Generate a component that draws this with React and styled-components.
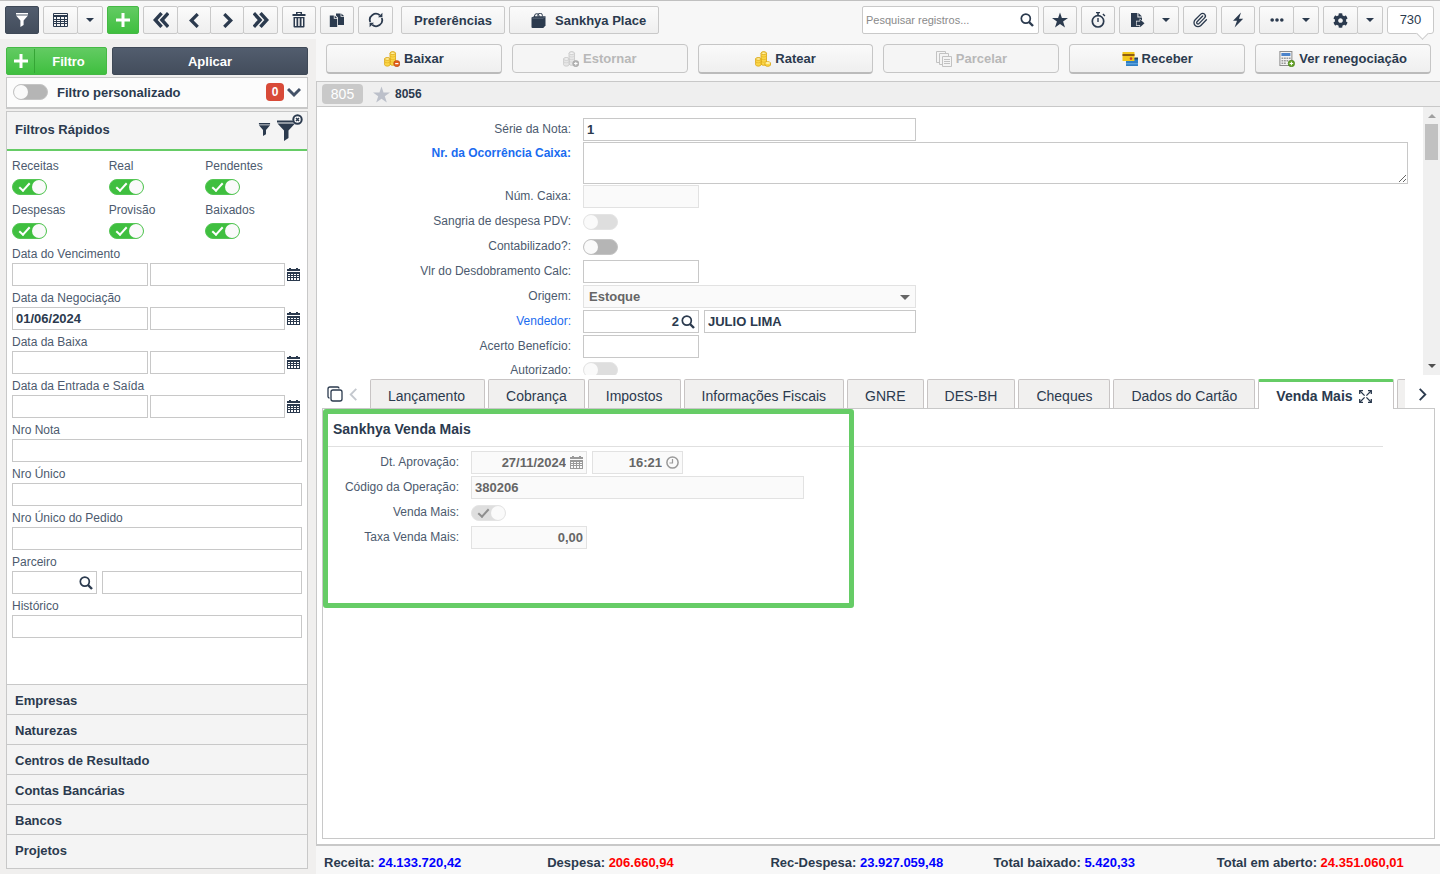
import React, { useState } from "react";
import styled, { createGlobalStyle, css } from "styled-components";
import { FaCog } from "react-icons/fa";
import { Paperclip } from "lucide-react";

const accordionItems = [
  "Empresas",
  "Naturezas",
  "Centros de Resultado",
  "Contas Bancárias",
  "Bancos",
  "Projetos",
];

const statusFilters = [
  "Receitas",
  "Real",
  "Pendentes",
  "Despesas",
  "Provisão",
  "Baixados",
];

const dateFilters = [
  { id: "vencimento", label: "Data do Vencimento" },
  { id: "negociacao", label: "Data da Negociação", from: "01/06/2024" },
  { id: "baixa", label: "Data da Baixa" },
  { id: "entrada", label: "Data da Entrada e Saída" },
];

const textFilters = [
  { id: "nota", label: "Nro Nota" },
  { id: "unico", label: "Nro Único" },
  { id: "pedido", label: "Nro Único do Pedido" },
];

const tabs = [
  "Lançamento",
  "Cobrança",
  "Impostos",
  "Informações Fiscais",
  "GNRE",
  "DES-BH",
  "Cheques",
  "Dados do Cartão",
  "Venda Mais",
];

const totals = [
  { label: "Receita:", value: "24.133.720,42", color: "#0000ff" },
  { label: "Despesa:", value: "206.660,94", color: "#ff0000" },
  { label: "Rec-Despesa:", value: "23.927.059,48", color: "#0000ff" },
  { label: "Total baixado:", value: "5.420,33", color: "#0000ff" },
  { label: "Total em aberto:", value: "24.351.060,01", color: "#ff0000" },
];

/* Icons */

const Icon = ({ size = 16, box = 16, children, ...rest }) => (
  <svg
    width={size}
    height={size}
    viewBox={`0 0 ${box} ${box}`}
    fill="currentColor"
    aria-hidden="true"
    {...rest}
  >
    {children}
  </svg>
);

const FunnelIcon = ({ size = 14 }) => (
  <Icon size={size} box={14}>
    <path d="M1 0h12v1.5H1zM1 2.5h12L8.6 7.6V12L5.4 14V7.6z" />
  </Icon>
);

const GridIcon = () => (
  <Icon size={15} box={15}>
    <path
      d="M1 0h13a1 1 0 0 1 1 1v12a1 1 0 0 1-1 1H1a1 1 0 0 1-1-1V1a1 1 0 0 1 1-1zM1 1v1h13V1zM1 4v2h2V4zm3 0v2h3V4zm4 0v2h3V4zm4 0v2h2V4zM1 7v1h2V7zm3 0v1h3V7zm4 0v1h3V7zm4 0v1h2V7zM1 9v1h2V9zm3 0v1h3V9zm4 0v1h3V9zm4 0v1h2V9zM1 11v2h2v-2zm3 0v2h3v-2zm4 0v2h3v-2zm4 0v2h2v-2z"
      fillRule="evenodd"
    />
  </Icon>
);

const CaretIcon = () => (
  <Icon size={8} box={8}>
    <path d="M0 2h8L4 6z" />
  </Icon>
);

const PlusIcon = () => (
  <Icon size={14} box={14}>
    <path d="M5.5 0h3v5.5H14v3H8.5V14h-3V8.5H0v-3h5.5z" />
  </Icon>
);

const ChevronIcon = ({ size = 15, weight = 3, dir = "left", double }) => (
  <Icon
    size={size}
    box={14}
    fill="none"
    stroke="currentColor"
    strokeWidth={weight}
    transform={dir === "right" ? "scale(-1 1)" : undefined}
  >
    {double ? (
      <path d="M7.5 1 2 7l5.5 6M13.3 1 7.8 7l5.5 6" />
    ) : (
      <path d="M10 1 4 7l6 6" />
    )}
  </Icon>
);

const TrashIcon = () => (
  <Icon>
    <path
      d="M5 0h6v2h3.5v2h-13V2H5zm1.5 1v1h3V1z"
      fillRule="evenodd"
    />
    <path
      d="M2.5 5h11v9.5a1 1 0 0 1-1 1h-9a1 1 0 0 1-1-1zM4 6.2V14h1.5V6.2zm3.2 0V14h1.5V6.2zm3.3 0V14H12V6.2z"
      fillRule="evenodd"
    />
  </Icon>
);

const CopyIcon = () => (
  <Icon>
    <path d="M7 1.5h4.6v3.3H15V13H9V5.6L7 3.4z" />
    <path d="M12.4 1.5 15 4H12.4z" />
    <path d="M0.8 3.6h4v3.2h3.4V15H0.8z" />
    <path d="M5.6 3.6 8.2 6H5.6z" />
  </Icon>
);

const RefreshIcon = () => (
  <Icon fill="none" stroke="currentColor" strokeWidth="1.8">
    <path d="M2.2 10A6.1 6.1 0 0 1 11.8 3.2M13.8 6A6.1 6.1 0 0 1 4.2 12.8" />
    <path d="M10 5.2h4.4V0.8zM6 10.8H1.6v4.4z" fill="currentColor" stroke="none" />
  </Icon>
);

const BagIcon = () => (
  <Icon size={15} box={15}>
    <path d="M0.5 4.5 3 3.2h11.5v9.3L12.3 15H1.5a1 1 0 0 1-1-1z" />
    <path
      d="M3.5 4.5V3a2.3 2.3 0 0 1 4.6 0v1M6.8 3.4V2.5a2.3 2.3 0 0 1 4.6 0v1"
      fill="none"
      stroke="currentColor"
    />
    <path d="M1.5 5.2h10.6l2-1.5" stroke="#7c8795" strokeWidth="0.6" fill="none" />
  </Icon>
);

const SearchIcon = ({ size = 14 }) => (
  <Icon size={size} box={14} fill="none" stroke="currentColor">
    <circle cx="5.8" cy="5.6" r="4.5" strokeWidth="1.7" />
    <path d="m9 9 4 4" strokeWidth="2.4" />
  </Icon>
);

const StarIcon = ({ size = 16 }) => (
  <Icon size={size}>
    <path d="m8 0.5 1.9 5.6H16l-4.9 3.5 1.9 5.9-5-3.6-5 3.6 1.9-5.9L0 6.1h6.1z" />
  </Icon>
);

const TimerIcon = () => (
  <Icon>
    <circle cx="8" cy="9.3" r="5.7" fill="none" stroke="currentColor" strokeWidth="1.7" />
    <path d="M6 0h4v1.3H8.8v2H7.2v-2H6zM12.4 2.4l1-1 2 2-1 1zM7.3 6h1.4v4H7.3z" />
  </Icon>
);

const ExportIcon = () => (
  <Icon>
    <path d="M2 1h6.4v4.6H13v3L10.6 6.4v2.4H7v5h3.6v1.2H2z" />
    <path d="M9.4 1 13 4.6H9.4z" />
    <path d="M7.6 9.6h3.5V7.4l4.4 3.9-4.4 3.9V13H7.6z" />
  </Icon>
);

const BoltIcon = () => (
  <Icon>
    <path d="M11 0.5 3 8.8h4L4.6 15.5 13.2 6.8H9z" />
  </Icon>
);

const DotsIcon = () => (
  <Icon>
    <circle cx="3.2" cy="8" r="1.8" />
    <circle cx="8" cy="8" r="1.8" />
    <circle cx="12.8" cy="8" r="1.8" />
  </Icon>
);

const CalendarIcon = () => (
  <Icon size={13} box={13}>
    <path
      d="M2 0h2v1h5V0h2v1h2v2H0V1h2zM0 4h13v9H0zM1 6v1h2V6zm3 0v1h2V6zm3 0v1h2V6zm3 0v1h2V6zM1 8v1h2V8zm3 0v1h2V8zm3 0v1h2V8zm3 0v1h2V8zM1 10v2h2v-2zm3 0v2h2v-2zm3 0v2h2v-2zm3 0v2h2v-2z"
      fillRule="evenodd"
    />
  </Icon>
);

const ClockIcon = () => (
  <Icon size={13} box={13} fill="none" stroke="currentColor">
    <circle cx="6.5" cy="6.5" r="5.6" strokeWidth="1.5" />
    <path d="M6.5 3v4H3.5" strokeWidth="1.2" />
  </Icon>
);

const ClearFunnelIcon = () => (
  <Icon size={28} box={28} overflow="visible">
    <path d="M1 4.5h15.5l1.5 2H1zM1.5 7.5h17.5L12.5 14.5V22L8 25V14.5z" />
    <circle cx="21.5" cy="3.5" r="4.2" fill="#fff" stroke="currentColor" strokeWidth="2" />
    <path d="m20 2 3 3M23 2l-3 3" stroke="currentColor" strokeWidth="1.5" />
  </Icon>
);

const WindowsIcon = () => (
  <Icon fill="none" stroke="currentColor" strokeWidth="1.3">
    <rect x="4" y="4" width="11" height="11" rx="2" />
    <path d="M2.5 12A1.5 1.5 0 0 1 1 10.5V3a2 2 0 0 1 2-2h7.5A1.5 1.5 0 0 1 12 2.5" />
  </Icon>
);

const ExpandIcon = () => (
  <Icon size={13} box={13} fill="none" stroke="currentColor" strokeWidth="1.3">
    <path d="M0.7 4V0.7H4M9 0.7h3.3V4M12.3 9v3.3H9M4 12.3H0.7V9" />
    <path d="m1 1 4.6 4.6M12 1 7.4 5.6M12 12 7.4 7.4M1 12l4.6-4.6" />
  </Icon>
);

const Coins = ({ line, fill, light }) => (
  <g stroke={line} strokeWidth="0.8">
    <path d="M6 2.2C6 .4 11.5.4 11.5 2.2V13c0 1.8-5.5 1.8-5.5 0z" fill={fill} />
    <ellipse cx="8.7" cy="2.2" rx="2.7" ry="1.3" fill={light} />
    <path
      d="M6 4.8c0 1.6 5.5 1.6 5.5 0M6 7.4C6 9 11.5 9 11.5 7.4M6 10c0 1.6 5.5 1.6 5.5 0"
      fill="none"
      opacity="0.6"
    />
    <path d="M.6 8c0-1.8 5.4-1.8 5.4 0v5.8c0 1.8-5.4 1.8-5.4 0z" fill={fill} />
    <ellipse cx="3.3" cy="8" rx="2.7" ry="1.3" fill={light} />
    <path d="M.6 10.6c0 1.6 5.4 1.6 5.4 0" fill="none" opacity="0.6" />
  </g>
);

const CoinsMinusIcon = () => (
  <Icon>
    <Coins line="#dba510" fill="#fbd649" light="#fff2a6" />
    <circle cx="12.8" cy="12.6" r="3.1" fill="#e2601c" stroke="#b5430c" strokeWidth="0.6" />
    <path d="M11.2 12h3.2v1.2h-3.2z" fill="#fff" />
  </Icon>
);

const CoinsPlusIcon = () => (
  <Icon>
    <Coins line="#c6c6c6" fill="#e6e6e6" light="#f4f4f4" />
    <circle cx="12.8" cy="12.6" r="3.1" fill="#b4b4b4" stroke="#a2a2a2" strokeWidth="0.6" />
    <path d="M12.3 10.9h1v1.2h1.2v1h-1.2v1.2h-1v-1.2h-1.2v-1h1.2z" fill="#fff" />
  </Icon>
);

const CoinsIcon = () => (
  <Icon>
    <Coins line="#dba510" fill="#fbd649" light="#fff2a6" />
    <path
      d="M10 12c0-1.8 5.5-1.8 5.5 0v2c0 1.8-5.5 1.8-5.5 0z"
      fill="#fbd649"
      stroke="#dba510"
      strokeWidth="0.8"
    />
    <ellipse cx="12.7" cy="12" rx="2.4" ry="1" fill="#fff2a6" />
  </Icon>
);

const SheetsIcon = () => (
  <Icon fill="#f4f4f4" stroke="#c2c2c2">
    <path d="M.5.5h9v11h-9z" />
    <path d="M3.5 2.5h9v11h-9z" />
    <path d="M6.5 5.5h9v10h-9z" />
    <path d="M8 8.5h6M8 10.5h6M8 12.5h6" />
  </Icon>
);

const CardsIcon = () => (
  <Icon>
    <rect x="4" y="7" width="12" height="8" rx="0.6" fill="#2f7ec4" />
    <path d="M4 12h12v1.4H4z" fill="#5ba2dd" />
    <rect x="0.5" y="1" width="12" height="9" rx="0.6" fill="#f3c71c" />
    <path d="M.5 3h12v2H.5z" fill="#8d5d12" />
    <circle cx="9" cy="7.6" r="1.3" fill="#c8402f" />
    <path d="M12.5 6.5h3.5v2h-3.5z" fill="#27425f" />
  </Icon>
);

const CalculatorIcon = () => (
  <Icon>
    <rect x="0.9" y="0.5" width="12" height="14" fill="#f2f2f2" stroke="#8c8c8c" />
    <path d="M2.4 2h9v3h-9z" fill="#4b83cb" />
    <path
      d="M2.5 6.5h1.8V8H2.5zm2.5 0h1.8V8H5zm2.5 0h1.8V8H7.5zm2.5 0h1.6V8H10zM2.5 9h1.8v1.5H2.5zM5 9h1.8v1.5H5zm2.5 0h1.8v1.5H7.5zM2.5 11.5h1.8V13H2.5zm2.5 0h1.8V13H5z"
      fill="#9a9a9a"
    />
    <circle cx="12.4" cy="12.5" r="3.2" fill="#6aa72b" stroke="#3f7714" strokeWidth="0.7" />
    <path d="M11.9 10.8h1V12h1.2v1h-1.2v1.2h-1V13h-1.2v-1h1.2z" fill="#fff" />
  </Icon>
);

const Home = () => {
  const [activeTab, setActiveTab] = useState("Venda Mais");

  return (
    <Page>
      <GlobalStyle />
      <Toolbar>
        <ToolGroup>
          <ToolButton $variant="dark" $width={34} aria-label="Filtros">
            <FunnelIcon />
          </ToolButton>
        </ToolGroup>
        <ToolGroup>
          <ToolButton $width={35} aria-label="Modo grade">
            <GridIcon />
          </ToolButton>
          <ToolButton $width={26} aria-label="Opções da grade">
            <CaretIcon />
          </ToolButton>
        </ToolGroup>
        <ToolGroup>
          <ToolButton $variant="green" $width={32} aria-label="Novo">
            <PlusIcon />
          </ToolButton>
        </ToolGroup>
        <ToolGroup>
          <ToolButton $width={35} aria-label="Primeiro">
            <ChevronIcon double size={16} />
          </ToolButton>
          <ToolButton $width={34} aria-label="Anterior">
            <ChevronIcon />
          </ToolButton>
          <ToolButton $width={34} aria-label="Próximo">
            <ChevronIcon dir="right" />
          </ToolButton>
          <ToolButton $width={35} aria-label="Último">
            <ChevronIcon dir="right" double size={16} />
          </ToolButton>
        </ToolGroup>
        <ToolGroup>
          <ToolButton $width={34} aria-label="Excluir">
            <TrashIcon />
          </ToolButton>
        </ToolGroup>
        <ToolGroup>
          <ToolButton $width={34} aria-label="Duplicar">
            <CopyIcon />
          </ToolButton>
        </ToolGroup>
        <ToolGroup>
          <ToolButton $width={35} aria-label="Atualizar">
            <RefreshIcon />
          </ToolButton>
        </ToolGroup>
        <TextTools>
          <ToolButton $pad="0 12px">Preferências</ToolButton>
          <ToolButton $pad="0 12px 0 21px">
            <BagIcon />
            Sankhya Place
          </ToolButton>
        </TextTools>
        <SearchBox>
          <SearchInput
            aria-label="Pesquisar registros"
            placeholder="Pesquisar registros..."
          />
          <SearchIcon />
        </SearchBox>
        <ToolGroup>
          <ToolButton $width={34} aria-label="Favoritos">
            <StarIcon />
          </ToolButton>
        </ToolGroup>
        <ToolGroup>
          <ToolButton $width={34} aria-label="Cronômetro">
            <TimerIcon />
          </ToolButton>
        </ToolGroup>
        <ToolGroup>
          <ToolButton $width={35} aria-label="Exportar">
            <ExportIcon />
          </ToolButton>
          <ToolButton $width={26} aria-label="Opções de exportação">
            <CaretIcon />
          </ToolButton>
        </ToolGroup>
        <ToolGroup>
          <ToolButton $width={34} aria-label="Anexos">
            <Paperclip size={16} strokeWidth={2} />
          </ToolButton>
        </ToolGroup>
        <ToolGroup>
          <ToolButton $width={34} aria-label="Ações">
            <BoltIcon />
          </ToolButton>
        </ToolGroup>
        <ToolGroup>
          <ToolButton $width={35} aria-label="Outras opções">
            <DotsIcon />
          </ToolButton>
          <ToolButton $width={26} aria-label="Abrir outras opções">
            <CaretIcon />
          </ToolButton>
        </ToolGroup>
        <ToolGroup>
          <ToolButton $width={35} aria-label="Configurações">
            <FaCog size={15} />
          </ToolButton>
          <ToolButton $width={26} aria-label="Abrir configurações">
            <CaretIcon />
          </ToolButton>
        </ToolGroup>
        <Counter>730</Counter>
      </Toolbar>

      <Body>
        <Sidebar>
          <FilterButtons>
            <AddFilter>
              <AddIcon>
                <PlusIcon />
              </AddIcon>
              <AddText>Filtro</AddText>
            </AddFilter>
            <ApplyButton>Aplicar</ApplyButton>
          </FilterButtons>

          <CustomFilter>
            <Toggle id="personalizado" />
            <CustomLabel htmlFor="personalizado">Filtro personalizado</CustomLabel>
            <FilterCount>0</FilterCount>
            <ExpandFilter aria-label="Expandir filtro">
              <Icon size={14} box={14} fill="none" stroke="currentColor" strokeWidth="3">
                <path d="m1 4 6 6 6-6" />
              </Icon>
            </ExpandFilter>
          </CustomFilter>

          <Accordion>
            <AccordionHeader>
              Filtros Rápidos
              <HeaderIcons>
                <FunnelIcon size={13} />
                <ClearFunnelIcon />
              </HeaderIcons>
            </AccordionHeader>
            <AccordionBody>
              <ToggleGrid>
                {statusFilters.map((name) => (
                  <div key={name}>
                    <FilterLabel htmlFor={name}>{name}</FilterLabel>
                    <ToggleLine>
                      <Toggle id={name} defaultChecked />
                    </ToggleLine>
                  </div>
                ))}
              </ToggleGrid>
              {dateFilters.map(({ id, label, from }) => (
                <FilterItem key={id}>
                  <FilterLabel htmlFor={id}>{label}</FilterLabel>
                  <DateLine>
                    <Field id={id} defaultValue={from} />
                    <Field aria-label={`${label} até`} />
                    <CalendarButton aria-label="Escolher data">
                      <CalendarIcon />
                    </CalendarButton>
                  </DateLine>
                </FilterItem>
              ))}
              {textFilters.map(({ id, label }) => (
                <FilterItem key={id}>
                  <FilterLabel htmlFor={id}>{label}</FilterLabel>
                  <Field id={id} />
                </FilterItem>
              ))}
              <FilterItem>
                <FilterLabel htmlFor="parceiro">Parceiro</FilterLabel>
                <LookupLine>
                  <IconField $width={85}>
                    <BareInput id="parceiro" />
                    <SearchIcon />
                  </IconField>
                  <Field aria-label="Nome do parceiro" />
                </LookupLine>
              </FilterItem>
              <FilterItem>
                <FilterLabel htmlFor="historico">Histórico</FilterLabel>
                <Field id="historico" />
              </FilterItem>
            </AccordionBody>
            <AccordionList>
              {accordionItems.map((item) => (
                <AccordionItem key={item}>{item}</AccordionItem>
              ))}
            </AccordionList>
          </Accordion>
        </Sidebar>

        <Main>
          <Actions>
            <ActionButton>
              <CoinsMinusIcon />
              Baixar
            </ActionButton>
            <ActionButton disabled>
              <CoinsPlusIcon />
              Estornar
            </ActionButton>
            <ActionButton>
              <CoinsIcon />
              Ratear
            </ActionButton>
            <ActionButton disabled>
              <SheetsIcon />
              Parcelar
            </ActionButton>
            <ActionButton>
              <CardsIcon />
              Receber
            </ActionButton>
            <ActionButton>
              <CalculatorIcon />
              Ver renegociação
            </ActionButton>
          </Actions>

          <Record>
            <RecordBar>
              <RecordBadge>805</RecordBadge>
              <StarIcon size={17} />
              <RecordNumber>8056</RecordNumber>
            </RecordBar>

            <FormArea>
              <Form>
                <FormRow>
                  <FormLabel htmlFor="serie">Série da Nota:</FormLabel>
                  <Field id="serie" $width={333} defaultValue="1" />
                </FormRow>
                <FormRow $tall>
                  <FormLabel htmlFor="ocorrencia" $link $bold>
                    Nr. da Ocorrência Caixa:
                  </FormLabel>
                  <TextArea id="ocorrencia" />
                </FormRow>
                <FormRow>
                  <FormLabel htmlFor="caixa">Núm. Caixa:</FormLabel>
                  <Field id="caixa" $width={116} disabled />
                </FormRow>
                <FormRow>
                  <FormLabel htmlFor="sangria">Sangria de despesa PDV:</FormLabel>
                  <Toggle id="sangria" disabled />
                </FormRow>
                <FormRow>
                  <FormLabel htmlFor="contabilizado">Contabilizado?:</FormLabel>
                  <Toggle id="contabilizado" />
                </FormRow>
                <FormRow>
                  <FormLabel htmlFor="desdobramento">Vlr do Desdobramento Calc:</FormLabel>
                  <Field id="desdobramento" $width={116} />
                </FormRow>
                <FormRow>
                  <FormLabel htmlFor="origem">Origem:</FormLabel>
                  <SelectBox>
                    <Select id="origem" disabled>
                      <option>Estoque</option>
                    </Select>
                    <Icon size={10} box={10}>
                      <path d="M0 3h10L5 8z" />
                    </Icon>
                  </SelectBox>
                </FormRow>
                <FormRow>
                  <FormLabel htmlFor="vendedor" $link>
                    Vendedor:
                  </FormLabel>
                  <IconField $width={116}>
                    <BareInput id="vendedor" $right defaultValue="2" />
                    <SearchIcon />
                  </IconField>
                  <Field aria-label="Nome do vendedor" $width={212} defaultValue="JULIO LIMA" />
                </FormRow>
                <FormRow>
                  <FormLabel htmlFor="acerto">Acerto Benefício:</FormLabel>
                  <Field id="acerto" $width={116} />
                </FormRow>
                <FormRow $last>
                  <FormLabel htmlFor="autorizado">Autorizado:</FormLabel>
                  <Toggle id="autorizado" disabled />
                </FormRow>
              </Form>
              <ScrollBar>
                <Icon size={8} box={8} fill="#a0a0a0">
                  <path d="M0 6h8L4 2z" />
                </Icon>
                <ScrollTrack>
                  <ScrollThumb />
                </ScrollTrack>
                <Icon size={8} box={8} fill="#505050">
                  <path d="M0 2h8L4 6z" />
                </Icon>
              </ScrollBar>
            </FormArea>

            <TabBar>
              <TabTool aria-label="Destacar abas">
                <WindowsIcon />
              </TabTool>
              <TabTool disabled aria-label="Aba anterior">
                <ChevronIcon size={13} weight={2} />
              </TabTool>
              <TabStrip role="tablist">
                {tabs.map((tab) => (
                  <Tab
                    key={tab}
                    role="tab"
                    aria-selected={tab === activeTab}
                    $active={tab === activeTab}
                    onClick={() => setActiveTab(tab)}
                  >
                    {tab}
                    {tab === activeTab && <ExpandIcon />}
                  </Tab>
                ))}
                <Tab role="tab" aria-label="Próxima aba" />
              </TabStrip>
              <NextTabs aria-label="Próximas abas">
                <ChevronIcon dir="right" size={13} weight={2} />
              </NextTabs>
            </TabBar>

            <TabPanel role="tabpanel">
              <PanelTitle>Sankhya Venda Mais</PanelTitle>
              <FormRow>
                <FormLabel htmlFor="aprovacao" $narrow>
                  Dt. Aprovação:
                </FormLabel>
                <IconField $width={116} $disabled>
                  <BareInput id="aprovacao" $right disabled defaultValue="27/11/2024" />
                  <CalendarIcon />
                </IconField>
                <IconField $width={91} $disabled>
                  <BareInput aria-label="Hora" $right disabled defaultValue="16:21" />
                  <ClockIcon />
                </IconField>
              </FormRow>
              <FormRow>
                <FormLabel htmlFor="operacao" $narrow>
                  Código da Operação:
                </FormLabel>
                <Field id="operacao" $width={333} disabled defaultValue="380206" />
              </FormRow>
              <FormRow>
                <FormLabel htmlFor="vendamais" $narrow>
                  Venda Mais:
                </FormLabel>
                <Toggle id="vendamais" disabled defaultChecked />
              </FormRow>
              <FormRow>
                <FormLabel htmlFor="taxa" $narrow>
                  Taxa Venda Mais:
                </FormLabel>
                <Field id="taxa" $width={116} $right disabled defaultValue="0,00" />
              </FormRow>
              <Highlight />
            </TabPanel>
          </Record>

          <Footer>
            {totals.map(({ label, value, color }) => (
              <div key={label}>
                {label} <Amount $color={color}>{value}</Amount>
              </div>
            ))}
          </Footer>
        </Main>
      </Body>
    </Page>
  );
};

export default Home;

const GlobalStyle = createGlobalStyle`
  *, *::before, *::after {
    box-sizing: border-box;
  }
  body {
    margin: 0;
    font-family: "Liberation Sans", Arial, sans-serif;
    font-size: 13px;
    color: #2b3a4e;
    background: #f7f7f7;
  }
  button, input, select, textarea {
    font: inherit;
    color: inherit;
    margin: 0;
  }
  button {
    padding: 0;
    border: none;
    background: none;
    cursor: pointer;
  }
  svg {
    flex: none;
    display: block;
  }
`;

const Page = styled.div`
  height: 100vh;
  display: flex;
  flex-direction: column;
  overflow: hidden;
`;

/* Toolbar */
const Toolbar = styled.header`
  flex: none;
  display: flex;
  align-items: center;
  gap: 4px;
  height: 39px;
  padding: 0 6px 0 5px;
  border-top: 1px solid #c0c0c0;
`;
const ToolGroup = styled.div`
  display: flex;
  flex: none;
`;
const ToolButton = styled.button`
  display: flex;
  align-items: center;
  justify-content: center;
  gap: 9px;
  width: ${({ $width }) => ($width ? `${$width}px` : "auto")};
  height: 28px;
  padding: ${({ $pad }) => $pad || "0"};
  font-weight: bold;
  white-space: nowrap;
  border: 1px solid #c9c9c9;
  border-radius: 2px;
  background: linear-gradient(#fbfbfb, #efefef);

  & + & {
    margin-left: -1px;
  }
  ${({ $variant }) =>
    $variant === "dark" &&
    css`
      color: white;
      border-color: #3f4957;
      background: linear-gradient(#525d6e, #434d5c);
    `}
  ${({ $variant }) =>
    $variant === "green" &&
    css`
      color: white;
      border-color: #45b945;
      background: linear-gradient(#63cb63, #3fbf3f);
    `}
`;
const TextTools = styled.div`
  display: flex;
  gap: 5px;
  margin: 0 auto 0 4px;

  & > button + button {
    margin-left: 0;
  }
`;
const SearchBox = styled.div`
  display: flex;
  align-items: center;
  width: 177px;
  height: 28px;
  padding: 0 4px 0 3px;
  border: 1px solid #c9c9c9;
  border-radius: 2px;
  background: white;
`;
const SearchInput = styled.input`
  flex: 1;
  min-width: 0;
  padding: 0;
  border: none;
  outline: none;
  font-size: 11px;
  &::placeholder {
    color: #8a8a8a;
  }
`;
const Counter = styled.div`
  position: relative;
  width: 47px;
  height: 28px;
  line-height: 26px;
  text-align: center;
  border: 1px solid #c9c9c9;
  border-radius: 3px;
  background: white;

  &::after {
    content: "";
    position: absolute;
    right: 6px;
    bottom: -5px;
    width: 9px;
    height: 9px;
    border: solid #c9c9c9;
    border-width: 0 1px 1px 0;
    background: white;
    transform: rotate(45deg);
  }
`;

const Body = styled.div`
  flex: 1;
  min-height: 0;
  display: flex;
`;

/* Form parts */
const Field = styled.input`
  width: ${({ $width }) => ($width ? `${$width}px` : "100%")};
  min-width: 0;
  height: 23px;
  padding: 0 3px;
  font-weight: bold;
  text-align: ${({ $right }) => ($right ? "right" : "left")};
  border: 1px solid #c8c8c8;
  outline: none;
  background: white;
  &:disabled {
    color: #666;
    border-color: #e2e2e2;
    background: #fafafa;
  }
`;
const IconField = styled.div`
  flex: none;
  display: flex;
  align-items: center;
  gap: ${({ $disabled }) => ($disabled ? "4px" : "2px")};
  width: ${({ $width }) => $width}px;
  height: 23px;
  padding: 0 3px;
  border: 1px solid ${({ $disabled }) => ($disabled ? "#e2e2e2" : "#c8c8c8")};
  background: ${({ $disabled }) => ($disabled ? "#fafafa" : "white")};
  color: ${({ $disabled }) => ($disabled ? "#999" : "inherit")};
`;
const BareInput = styled.input`
  flex: 1;
  min-width: 0;
  padding: 0;
  border: none;
  outline: none;
  background: none;
  font-weight: bold;
  text-align: ${({ $right }) => ($right ? "right" : "left")};
  &:disabled {
    color: #666;
  }
`;
const Toggle = styled.input.attrs({ type: "checkbox" })`
  appearance: none;
  position: relative;
  flex: none;
  width: 35px;
  height: 16px;
  border: 1px solid #c4c4c4;
  border-radius: 8px;
  background: #b5b5b5;

  &::before {
    content: "";
    position: absolute;
    top: 0;
    left: 0;
    width: 14px;
    height: 14px;
    border-radius: 50%;
    background: #fafafa;
  }
  &:checked {
    border-color: #55c655;
    background: #3fbf3f;
  }
  &:checked::before {
    left: auto;
    right: 0;
  }
  &:checked::after {
    content: "";
    position: absolute;
    top: 3px;
    left: 6px;
    width: 11px;
    height: 6px;
    border: solid white;
    border-width: 0 0 2px 2px;
    transform: rotate(-48deg);
  }
  &:disabled {
    border-color: #e4e4e4;
    background: #dedede;
  }
  &:disabled::after {
    border-color: #8e8e8e;
  }
`;

/* Sidebar */
const Sidebar = styled.aside`
  flex: none;
  display: flex;
  flex-direction: column;
  gap: 2px;
  width: 316px;
  padding: 8px 8px 5px 6px;
  background: #f0efee;
`;
const FilterButtons = styled.div`
  display: flex;
  gap: 5px;
  height: 28px;
`;
const AddFilter = styled.button`
  display: flex;
  align-items: center;
  width: 101px;
  color: white;
  font-weight: bold;
  border: 1px solid #45b945;
  border-radius: 2px;
  background: linear-gradient(#63cb63, #3fbf3f);
`;
const AddIcon = styled.span`
  display: flex;
  align-items: center;
  justify-content: center;
  width: 28px;
  height: 24px;
  border-right: 1px solid #35a535;
`;
const AddText = styled.span`
  flex: 1;
  padding-right: 4px;
`;
const ApplyButton = styled.button`
  flex: 1;
  color: white;
  font-weight: bold;
  border: 1px solid #3f4957;
  border-radius: 2px;
  background: linear-gradient(#525d6e, #434d5c);
`;
const CustomFilter = styled.div`
  display: flex;
  align-items: center;
  height: 32px;
  padding: 0 6px 2px;
  border: 1px solid #c8c8c8;
  background: #fcfcfc;
  box-shadow: inset 0 -1px #c8c8c8;
`;
const CustomLabel = styled.label`
  flex: 1;
  margin-left: 9px;
  font-weight: bold;
`;
const FilterCount = styled.span`
  width: 18px;
  height: 18px;
  line-height: 18px;
  text-align: center;
  font-size: 12px;
  font-weight: bold;
  color: white;
  border-radius: 4px;
  background: #d84a38;
`;
const ExpandFilter = styled.button`
  margin-left: 3px;
  color: #445268;
`;
const Accordion = styled.div`
  flex: 1;
  min-height: 0;
  display: flex;
  flex-direction: column;
  border: 1px solid #c8c8c8;
  background: white;
`;
const AccordionHeader = styled.div`
  flex: none;
  display: flex;
  align-items: center;
  justify-content: space-between;
  height: 39px;
  padding: 0 3px 2px 8px;
  font-weight: bold;
  border-bottom: 2px solid #66cc66;
  background: #f4f4f4;
`;
const HeaderIcons = styled.div`
  display: flex;
  align-items: center;
  gap: 5px;
`;
const AccordionBody = styled.div`
  flex: 1;
  min-height: 0;
  overflow: hidden;
  padding: 5px;
`;
const ToggleGrid = styled.div`
  display: grid;
  grid-template-columns: repeat(3, 1fr);
`;
const ToggleLine = styled.div`
  display: flex;
  height: 24px;
  padding-top: 3px;
`;
const FilterItem = styled.div`
  margin-bottom: 2px;
`;
const FilterLabel = styled.label`
  display: block;
  padding-top: 1px;
  line-height: 19px;
  font-size: 12px;
  color: #4c5a6e;

  ${FilterItem} & {
    line-height: 18px;
  }
`;
const DateLine = styled.div`
  display: flex;
  align-items: center;
  gap: 2px;
`;
const CalendarButton = styled.button`
  padding-right: 2px;
`;
const LookupLine = styled.div`
  display: flex;
  gap: 5px;
`;
const AccordionList = styled.div`
  flex: none;
  display: grid;
  grid-auto-rows: 30px;
  padding-bottom: 4px;
  background: #f4f4f4;
`;
const AccordionItem = styled.button`
  padding: 2px 8px 0;
  text-align: left;
  font-weight: bold;
  border-top: 1px solid #c8c8c8;
`;

/* Main area */
const Main = styled.main`
  flex: 1;
  min-width: 0;
  display: flex;
  flex-direction: column;
`;
const Actions = styled.div`
  display: grid;
  grid-template-columns: repeat(6, 1fr);
  gap: 10px;
  padding: 5px 9px 7px 10px;
`;
const ActionButton = styled.button`
  display: flex;
  align-items: center;
  justify-content: center;
  gap: 4px;
  height: 30px;
  font-weight: bold;
  white-space: nowrap;
  border: 1px solid #c6c6c6;
  border-bottom: 2px solid #bbb;
  border-radius: 4px;
  background: linear-gradient(#fafafa, #efefef);
  &:disabled {
    color: #b8b8b8;
    border-bottom: 1px solid #c6c6c6;
    background: #f5f5f5;
    height: 29px;
  }
`;
const Record = styled.section`
  flex: 1;
  min-height: 0;
  display: flex;
  flex-direction: column;
  padding-bottom: 5px;
  border-left: 1px solid #c8c8c8;
  border-bottom: 2px solid #c8c8c8;
  background: white;
`;
const RecordBar = styled.div`
  flex: none;
  display: flex;
  align-items: center;
  height: 26px;
  padding-left: 5px;
  color: #bcc0ca;
  border-top: 1px solid #c8c8c8;
  border-bottom: 1px solid #c8c8c8;
  background: #efefef;
`;
const RecordBadge = styled.span`
  width: 41px;
  height: 20px;
  margin-right: 10px;
  line-height: 20px;
  text-align: center;
  font-size: 14px;
  color: white;
  border-radius: 4px;
  background: #c9c9c9;
`;
const RecordNumber = styled.strong`
  margin-left: 5px;
  font-size: 12px;
  color: #2b3a4e;
`;
const FormArea = styled.div`
  flex: 0 0 268px;
  display: flex;
  overflow: hidden;
`;
const Form = styled.div`
  flex: 1;
  min-width: 0;
  padding: 10px 15px 0 0;
`;
const FormRow = styled.div`
  display: flex;
  align-items: ${({ $tall }) => ($tall ? "flex-start" : "center")};
  gap: 5px;
  height: ${({ $tall, $last }) => ($tall ? "42px" : $last ? "22px" : "25px")};
`;
const FormLabel = styled.label`
  flex: none;
  width: ${({ $narrow }) => ($narrow ? "136px" : "254px")};
  margin-right: 7px;
  line-height: 23px;
  text-align: right;
  font-size: 12px;
  font-weight: ${({ $bold }) => ($bold ? "bold" : "normal")};
  color: ${({ $link }) => ($link ? "#1a6cf0" : "#4c5a6e")};
`;
const TextArea = styled.textarea`
  flex: 1;
  height: 42px;
  border: 1px solid #c8c8c8;
  outline: none;
  resize: vertical;
`;
const SelectBox = styled.div`
  position: relative;
  width: 333px;
  color: #666;

  svg {
    position: absolute;
    top: 7px;
    right: 6px;
  }
`;
const Select = styled.select`
  appearance: none;
  display: block;
  width: 100%;
  height: 23px;
  padding: 0 5px;
  font-weight: bold;
  color: #666;
  opacity: 1;
  border: 1px solid #e2e2e2;
  border-radius: 0;
  background: #fafafa;
`;
const ScrollBar = styled.div`
  display: flex;
  flex-direction: column;
  align-items: center;
  width: 17px;
  padding: 5px 0;
  background: #f0f0f0;
`;
const ScrollTrack = styled.div`
  flex: 1;
  padding-top: 4px;
`;
const ScrollThumb = styled.div`
  width: 13px;
  height: 36px;
  background: #c1c1c1;
`;

/* Tabs */
const TabBar = styled.div`
  position: relative;
  z-index: 1;
  flex: none;
  display: flex;
  height: 30px;
  margin-top: 4px;
  padding-left: 9px;
`;
const TabTool = styled.button`
  width: 20px;
  padding: 0 1px;
  &:disabled {
    color: #c4c8ce;
  }
`;
const NextTabs = styled.button`
  display: flex;
  align-items: center;
  justify-content: center;
  width: 35px;
`;
const TabStrip = styled.div`
  flex: 1;
  min-width: 0;
  display: flex;
  gap: 3px;
  margin-left: 4px;
  overflow: hidden;
`;
const Tab = styled.button`
  flex: none;
  display: flex;
  align-items: center;
  gap: 6px;
  height: 29px;
  padding: 4px 17px 0;
  font-size: 14px;
  border: 1px solid #c8c4c4;
  border-bottom: none;
  border-radius: 2px 2px 0 0;
  background: #f1f0ef;

  &:first-child {
    padding: 4px 19px 0 17px;
  }
  ${({ $active }) =>
    $active &&
    css`
      height: 30px;
      padding: 1px 21px 0 17px;
      font-weight: bold;
      border-top: 3px solid #66cc66;
      background: white;
    `}
`;
const TabPanel = styled.div`
  position: relative;
  flex: 1;
  min-height: 0;
  margin: -1px 5px 0;
  border: 1px solid #c8c8c8;
  background: white;
`;
const PanelTitle = styled.h2`
  height: 38px;
  margin: 0 51px 3px 4px;
  padding-left: 6px;
  line-height: 40px;
  font-size: 14px;
  border-bottom: 1px solid #e0e0e0;
`;
const Highlight = styled.div`
  position: absolute;
  top: 0;
  left: 0;
  width: 531px;
  height: 199px;
  border: 5px solid #66cc66;
  border-radius: 3px;
  pointer-events: none;
`;

const Footer = styled.footer`
  flex: none;
  display: grid;
  grid-template-columns: repeat(5, 1fr);
  height: 28px;
  padding: 4px 0 0 8px;
  line-height: 25px;
  font-weight: bold;
  white-space: nowrap;
  overflow: hidden;
`;
const Amount = styled.span`
  color: ${({ $color }) => $color};
`;
